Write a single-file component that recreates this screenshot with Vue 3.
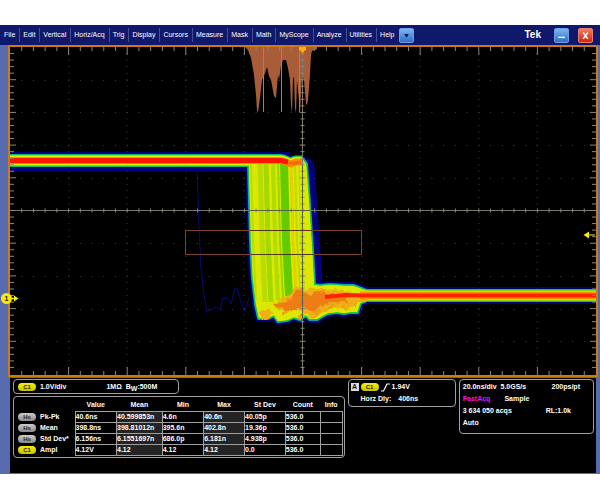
<template>
  <main class="scope">
    <header class="menu-bar">
      <nav class="menus">
        <button v-for="menu in menus" :key="menu" type="button">{{ menu }}</button>
      </nav>
      <button type="button" class="tool drop" aria-label="More menus">
        <svg viewBox="0 0 14 14"><path d="M4.5 5.5h5L7 9.5z" fill="#07125c" /></svg>
      </button>
      <span class="brand">Tek</span>
      <button type="button" class="tool" aria-label="Minimize">
        <svg viewBox="0 0 14 14"><path d="M3.5 9h7" stroke="#fff" stroke-width="1.5" /></svg>
      </button>
      <button type="button" class="tool close" aria-label="Close">
        <svg viewBox="0 0 14 14"><path d="M4.5 3.8l5 6.8M9.5 3.8l-5 6.8" stroke="#fff" stroke-width="1.6" /></svg>
      </button>
    </header>

    <div class="frame">
      <svg class="graph" viewBox="8 45 590 332" role="img" aria-label="Waveform">
        <defs>
          <clipPath id="screen"><rect x="10" y="47" width="586" height="328" /></clipPath>
          <clipPath id="burst"><path :d="body" /></clipPath>
          <filter id="rough" x="-5%" y="-10%" width="110%" height="120%">
            <feTurbulence type="fractalNoise" baseFrequency="0.16" numOctaves="2" seed="4" />
            <feDisplacementMap in="SourceGraphic" scale="7" xChannelSelector="R" yChannelSelector="G" />
            <feGaussianBlur stdDeviation="0.7" />
          </filter>
          <filter id="soft" filterUnits="userSpaceOnUse" x="0" y="40" width="610" height="340">
            <feGaussianBlur stdDeviation="0.5" />
          </filter>
        </defs>
        <rect x="8" y="45" width="590" height="332" fill="#cf7a10" />
        <rect x="10" y="47" width="586" height="328" fill="#000" />

        <path :d="histogram" fill="#a85c38" />

        <g clip-path="url(#screen)" fill="none">
          <!-- stray acquisition -->
          <path
            d="M197 168L198 198L199 228L201 268L204 295L207 312L212 309L216 307L220 309L223 298L228 299L231 304L235 288L238 290L241 303L245 311L249 298"
            stroke="#08087c"
            stroke-width="1"
          />
          <!-- blue halo -->
          <g stroke="#00007c" fill="#00007c" stroke-linejoin="round">
            <path d="M10 161.500H290" stroke-width="19" />
            <path d="M288 162H305" stroke-width="14" />
            <path d="M302 161L309 161L312 166L315 210L318 252L320 284" stroke-width="5" fill="none" />
            <path :d="body" stroke-width="8" />
            <path d="M360 295.500H596" stroke-width="17" />
          </g>
          <g filter="url(#soft)" stroke-linejoin="round">
            <g v-for="level in levels" :key="level.color" :stroke="level.color">
              <path :d="highTrace" :stroke-width="level.trace" />
              <path :d="body" :fill="level.color" :stroke-width="level.edge" />
              <path d="M358 295.500H600" :stroke-width="level.trace" />
            </g>
          </g>
          <path :d="body" fill="#dce800" />
          <g clip-path="url(#burst)">
            <g filter="url(#soft)">
              <path
                v-for="(s, i) in stripes"
                :key="i"
                :d="`M${s.x} 163L${s.x + 2} 240L${s.x + 5} ${s.end}`"
                :stroke="s.color"
                :stroke-width="s.w"
              />
            </g>
          </g>
          <g filter="url(#rough)">
            <path d="M261 311L268 307L273 311L269 319L261 319ZM272 302L286 298L295 288L302 287L308 291L315 287L321 290L339 289L352 292L369 293V300L356 303L350 309L334 308L321 314L311 319L305 313L294 309L278 311Z" fill="#eeb018" />
            <path d="M272 303L290 299L296 292L303 290L309 296L318 292L332 294L347 294V301L333 303L322 306L314 312L306 308L298 308L290 312L276 307Z" fill="#ee7d16" />
            <path d="M316 313l5-3M329 308l6-2M340 308l5-3M354 306l5-3M283 314l4-3M299 318l5-3" stroke="#e8a014" stroke-width="3" />
          </g>
          <g filter="url(#soft)">
            <path :d="highTrace" stroke="#ff8a00" stroke-width="7" />
            <path d="M0 160.500H281L288 162" stroke="#ff1200" stroke-width="5" />
            <path d="M289 162.500L294 163.500L301 162" stroke="#ee6c10" stroke-width="3" />
            <path d="M360 295.500H610" stroke="#ff9000" stroke-width="8" />
            <path d="M325 297L345 295L362 295.500H610" stroke="#ff2000" stroke-width="4" />
          </g>
        </g>

        <!-- graticule -->
        <path :d="dots" stroke="#8c8878" stroke-opacity="0.45" />
        <g stroke="#8a877a">
          <path d="M10 210.500H596M302.500 47V375" stroke="#7b776a" />
          <path :d="ticks" />
        </g>
        <path d="M249 210.500H310M302.500 166V319" stroke="#59604a" />
        <path d="M263.500 47V112M281.500 47V112M299.500 47V112" stroke="#c88400" />

        <rect x="185.500" y="230.500" width="176" height="24" fill="none" stroke="#7c4030" />
        <path d="M251 230.500H312M252 254.500H314" stroke="#4d3a12" />

        <path d="M299 47H306V49.500L302.500 53L299 49.500Z" fill="#ffac10" />
        <path d="M583.500 235L589 231.500V234.500H595V235.500H589V238.500Z" fill="#f6ee00" />
        <circle cx="6.500" cy="298.500" r="5.500" fill="#ffe900" />
        <path d="M11 298.500H15" stroke="#ffe900" stroke-width="1.5" />
        <path d="M14 295.500L18.500 298.500L14 301.500Z" fill="#ffe900" />
        <text x="4.500" y="301" class="marker">1</text>
      </svg>

      <section class="status">
        <div class="left">
          <div class="panel channel">
            <span class="pill c1">C1</span>
            <span class="scale">1.0V/div</span>
            <span>1MΩ&nbsp; <span class="bw">B<sub>W</sub></span>:500M</span>
          </div>
          <div class="panel measure">
            <table>
              <colgroup>
                <col v-for="(w, i) in widths" :key="i" :style="{ width: w + '%' }" />
              </colgroup>
              <thead>
                <tr>
                  <td></td>
                  <th v-for="h in heads" :key="h" scope="col">{{ h }}</th>
                </tr>
              </thead>
              <tbody>
                <tr v-for="row in rows" :key="row.name">
                  <th scope="row">
                    <span :class="['pill', row.src === 'C1' ? 'c1' : 'hs']">{{ row.src }}</span>{{ row.name }}
                  </th>
                  <td v-for="(v, i) in row.values" :key="i">{{ v }}</td>
                  <td></td>
                </tr>
              </tbody>
            </table>
          </div>
        </div>

        <div class="panel trigger">
          <div class="line">
            <span class="a">A</span>
            <span class="pill c1">C1</span>
            <svg class="slope" viewBox="0 0 9 9"><path d="M0 8H2.500L6 1H9" fill="none" stroke="#fff" stroke-width="1.2" /></svg>
            <span>1.94V</span>
          </div>
          <div class="line delay"><span>Horz Dly:</span><span>406ns</span></div>
        </div>

        <div class="panel horizontal">
          <span>20.0ns/div&nbsp; 5.0GS/s</span><span class="rate">200ps/pt</span>
          <span class="pair"><span class="fast">FastAcq</span><span>Sample</span></span><span></span>
          <span>3 634 050 acqs</span><span class="length">RL:1.0k</span>
          <span>Auto</span>
        </div>
      </section>
    </div>
  </main>
</template>

<script setup>
const menus = [
  'File', 'Edit', 'Vertical', 'Horiz/Acq', 'Trig', 'Display', 'Cursors',
  'Measure', 'Mask', 'Math', 'MyScope', 'Analyze', 'Utilities', 'Help',
]

const heads = ['Value', 'Mean', 'Min', 'Max', 'St Dev', 'Count', 'Info']
const widths = [17.6, 12.8, 14.1, 12.8, 12.6, 12.6, 10.8, 6.7]
const rows = [
  { src: 'Hs', name: 'Pk-Pk', values: ['40.6ns', '40.599853n', '4.6n', '40.6n', '40.05p', '536.0'] },
  { src: 'Hs', name: 'Mean', values: ['398.8ns', '398.81012n', '395.6n', '402.8n', '19.36p', '536.0'] },
  { src: 'Hs', name: 'Std Dev*', values: ['6.156ns', '6.1551697n', '686.0p', '6.181n', '4.938p', '536.0'] },
  { src: 'C1', name: 'Ampl', values: ['4.12V', '4.12', '4.12', '4.12', '0.0', '536.0'] },
]

const highTrace = 'M0 160.5H280C285 160 287 164 291 164L296 162H303'

const body =
  'M249 164L303 160L306 164L309 204L312 250L314 285L320 286L330 285L345 286L353 286L359 288L367 291' +
  'V300L360 303L357 312L350 312L344 313L337 312L328 313L322 316L317 319L310 319L306 315L300 319' +
  'L294 317L287 320L278 321L274 315L268 318L259 318L256 304L253 278L251 240Z'

const histogram =
  'M245 47L248 50L251 58L254 75L256 95L257 111L258 112L260 98L262 80L264 76L266 70L267 67L269 76' +
  'L271 80L274 96L276 98L278 75L279 80L281 65L283 60L286 60L288 68L290 80L291 105L292 113L293 78' +
  'L294 77L295 108L296 113L297 80L299 100L300 112L302 75L304 80L306 104L307 105L308 100L310 75' +
  'L311 55L312 51L317 49V47Z'

const levels = [
  { color: '#00a8b0', trace: 13, edge: 4 },
  { color: '#20d020', trace: 12, edge: 2 },
  { color: '#e8f000', trace: 10, edge: 0 },
]

const stripes = [
  { x: 251, w: 2, end: 300, color: '#b8de00' },
  { x: 260, w: 5, end: 302, color: '#b8dc00' },
  { x: 266, w: 5, end: 302, color: '#a4d800' },
  { x: 273, w: 4, end: 300, color: '#b0dc00' },
  { x: 278, w: 2, end: 298, color: '#98d600' },
  { x: 284, w: 8, end: 296, color: '#64cc00' },
  { x: 291, w: 3, end: 290, color: '#e6d000' },
  { x: 295, w: 2, end: 288, color: '#b8dc00' },
  { x: 299, w: 2, end: 288, color: '#c8e000' },
]

// ten divisions each way, five minor ticks per division
const dx = 58.6
const dy = 32.7
const x0 = 10
const y0 = 47

let dots = ''
let ticks = ''
for (let i = 1; i < 50; i++) {
  const x = x0 + (i * dx) / 5
  const y = y0 + (i * dy) / 5
  const major = i % 5 === 0
  const n = major ? 8 : 4
  ticks += `M${x} 47v${n}M${x} 375v${-n}M${x} 208.5v4`
  ticks += `M10 ${y}h${major ? 6 : 4}M596 ${y}h${major ? -6 : -4}M${major ? 299.5 : 300.5} ${y}h${major ? 6 : 4}`
  for (let j = 1; j < 10; j++) {
    if (j === 5) continue
    dots += `M${x - 0.5} ${Math.round(y0 + j * dy) + 0.5}h1`
    dots += `M${Math.round(x0 + j * dx) - 0.5} ${y}h1`
  }
}
</script>

<style>
body {
  margin: 0;
  background: #fff;
}
</style>

<style scoped>
.scope {
  padding-top: 25px;
  font-family: "Liberation Sans", Arial, sans-serif;
  font-size: 7px;
  line-height: 10px;
  color: #fff;
}

.menu-bar {
  display: flex;
  align-items: center;
  height: 20px;
  padding-right: 7px;
  background: #10186c;
}

.menus {
  display: flex;
}

.menus button {
  padding: 0 4px 0 3px;
  border: 0;
  border-right: 1px solid #46508e;
  background: none;
  color: #fff;
  font: inherit;
  line-height: 14px;
}

.menus button:first-child {
  padding-left: 4px;
}

.menus button:last-child {
  border-right: 0;
}

.tool {
  width: 15px;
  height: 15px;
  padding: 0;
  border: 1px solid #6f9ee0;
  border-radius: 2px;
  background: linear-gradient(#7db4f2, #2d70cc);
}

.tool svg {
  display: block;
  width: 100%;
}

.close {
  margin-left: 9px;
  border-color: #e88070;
  background: linear-gradient(#f47c60, #d42410);
}

.brand {
  margin-left: auto;
  margin-right: 13px;
  font-size: 10px;
  font-weight: bold;
}

.frame {
  padding: 0 2px 1px 8px;
  background: #566cae;
}

.graph {
  display: block;
  width: 100%;
  overflow: visible;
}

.marker {
  font-size: 7px;
  font-weight: bold;
  fill: #222;
}

.status {
  display: grid;
  grid-template-columns: minmax(0, 331fr) minmax(0, 108fr) minmax(0, 135fr);
  align-items: start;
  gap: 3px;
  min-height: 94px;
  margin: 1px 2px 0;
  padding: 1px 2px 0 3px;
  background: #000;
  font-weight: bold;
}

.panel {
  box-sizing: border-box;
  border: 1px solid #a0a0a0;
  border-radius: 4px;
}

.channel {
  display: flex;
  align-items: center;
  width: 50%;
  height: 15px;
  padding-left: 4px;
}

.scale {
  margin: 0 40px 0 4px;
}

.bw sub {
  font-size: 7px;
  line-height: 1px;
  vertical-align: -2px;
}

.pill {
  display: inline-block;
  box-sizing: border-box;
  width: 18px;
  height: 8px;
  border-radius: 4px;
  font-size: 6px;
  line-height: 8px;
  text-align: center;
  color: #222;
}

.c1 {
  background: linear-gradient(#f4f000, #c8c000);
}

.hs {
  background: linear-gradient(#ccc, #888);
}

.measure {
  margin-top: 2px;
  padding: 2px 1px 1px 4px;
}

table {
  width: 100%;
  border-collapse: collapse;
  table-layout: fixed;
}

th,
td {
  height: 10px;
  padding: 0;
  line-height: 10px;
  text-align: left;
  white-space: nowrap;
}

thead th {
  height: 12px;
  text-align: center;
}

tbody td {
  border: 1px solid #a0a0a0;
}

tbody td:nth-child(3),
tbody td:nth-child(5) {
  background: #242424;
}

tbody .pill {
  margin-right: 4px;
  vertical-align: middle;
}

.trigger {
  padding: 1px 2px;
}

.line {
  display: flex;
  align-items: center;
  height: 12px;
}

.a {
  width: 8px;
  margin-right: 2px;
  background: #ddd;
  color: #111;
  line-height: 8px;
  text-align: center;
}

.slope {
  width: 9px;
  margin: 0 2px;
}

.delay {
  gap: 7px;
  padding-left: 10px;
}

.horizontal {
  display: grid;
  grid-template-columns: 1fr auto;
  align-items: center;
  grid-auto-rows: 12px;
  padding: 1px 13px 4px 3px;
}

.pair {
  display: flex;
  gap: 14px;
}

.fast {
  color: #f010f0;
}

.rate,
.length {
  justify-self: end;
}

.length {
  margin-right: 9px;
}
</style>
